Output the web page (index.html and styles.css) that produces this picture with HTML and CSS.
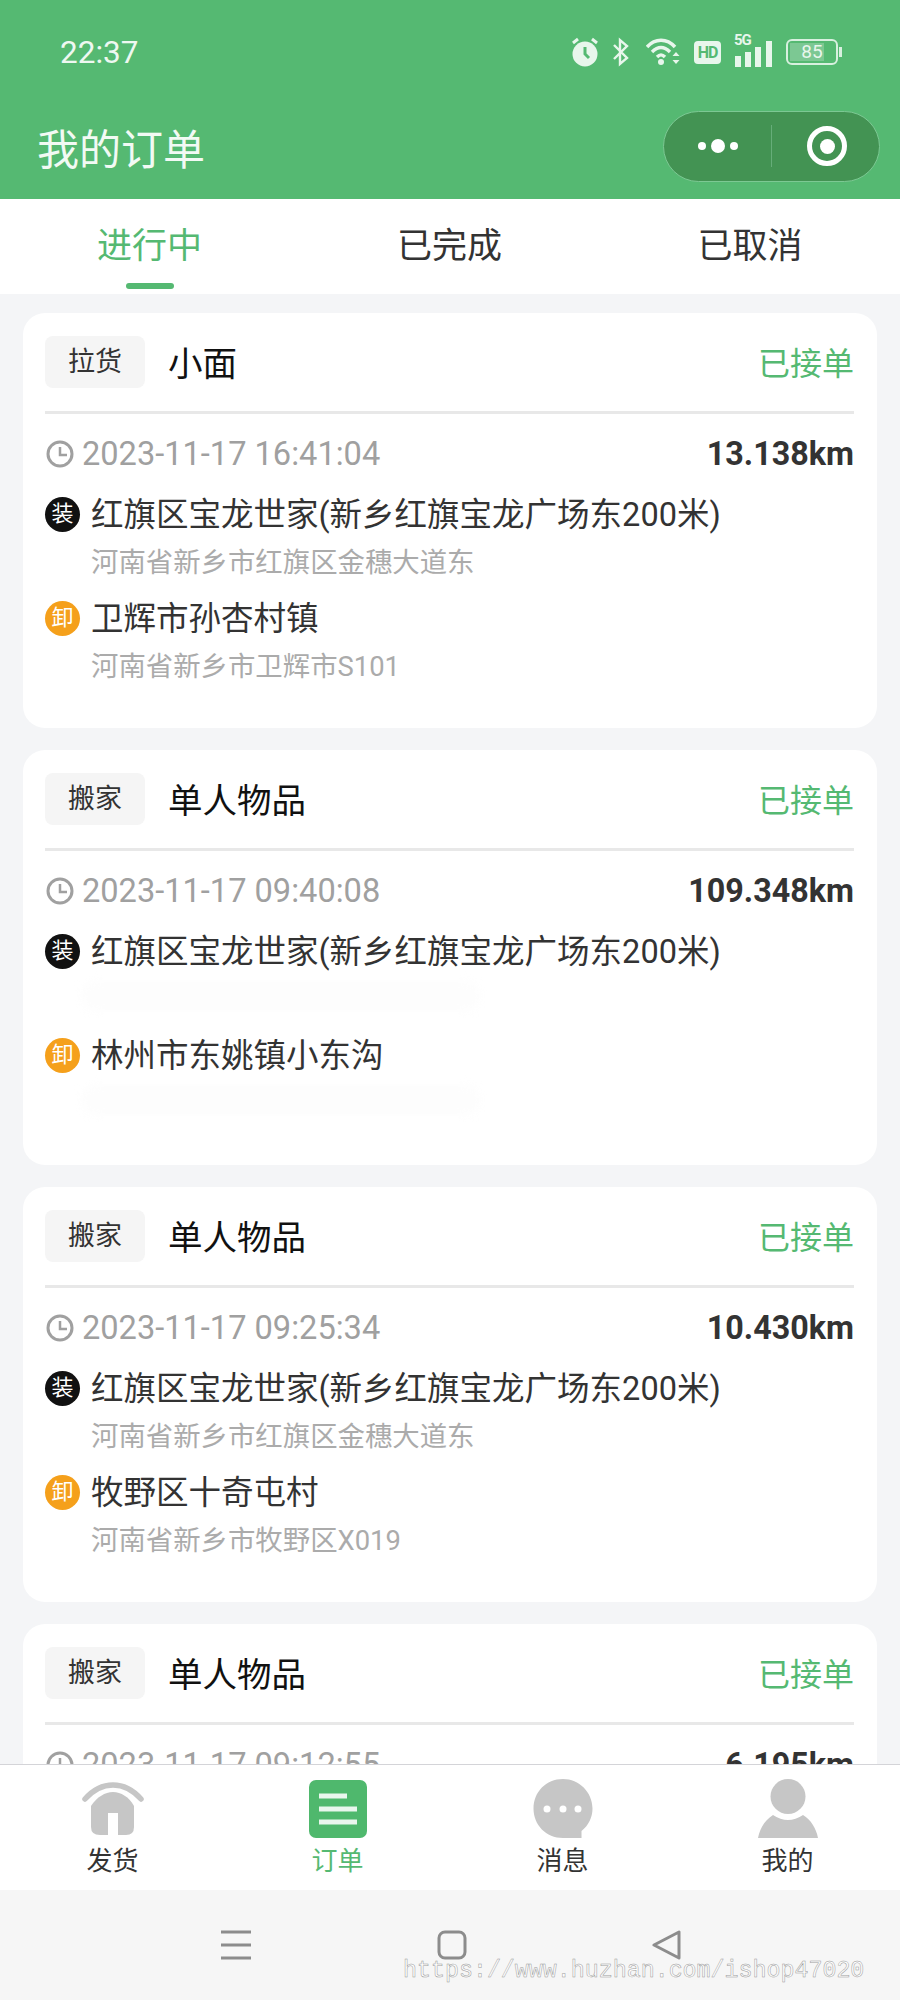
FILE: index.html
```html
<!DOCTYPE html>
<html lang="en">
  <head>
    <meta charset="UTF-8" />
    <title>我的订单</title>
    <link rel="stylesheet" href="styles.css">
  </head>
  <body>
    <header class="top">
      <div class="status">
        <span class="clock">22:37</span>
        <div class="status-icons">
          <svg class="ic-alarm" width="28" height="30" viewBox="0 0 28 30">
            <circle cx="14" cy="17" r="12.5" fill="#e8f6ec"/>
            <path d="M2 6 7 2M26 6 21 2" stroke="#e8f6ec" stroke-width="3" fill="none"/>
            <path d="M14 10v7l4 4" stroke="#55b972" stroke-width="3" fill="none"/>
          </svg>
          <svg class="ic-bt" width="18" height="30" viewBox="0 0 18 30">
            <path d="M2 8 15 21 8 27V3l7 6L2 22" stroke="#e8f6ec" stroke-width="2.4" fill="none"/>
          </svg>
          <svg class="ic-wifi" width="38" height="30" viewBox="0 0 38 30">
            <path d="M1 10C9 1 21 1 29 10M6 15c6-6 12-6 18 0M11 20c3-3 5-3 8 0" stroke="#e8f6ec" stroke-width="3.4" fill="none"/>
            <circle cx="15" cy="25" r="3" fill="#e8f6ec"/>
            <path d="M30 15l3.500 4h-7zM30 27l3.500-4h-7z" fill="#e8f6ec"/>
          </svg>
          <span class="hd">HD</span>
          <div class="signal">
            <span class="five-g">5G</span>
            <svg width="41" height="26" viewBox="0 0 41 26">
              <rect x="2" y="15" width="6" height="11" fill="#e8f6ec"/>
              <rect x="12" y="11" width="6" height="15" fill="#e8f6ec"/>
              <rect x="22" y="6" width="6" height="20" fill="#e8f6ec"/>
              <rect x="33" y="0" width="6" height="26" fill="#e8f6ec"/>
            </svg>
          </div>
          <div class="battery">
            <div class="battery-body"><span class="battery-level"></span><span class="battery-num">85</span></div>
            <span class="battery-tip"></span>
          </div>
        </div>
      </div>
      <div class="titlebar">
        <h1>我的订单</h1>
        <div class="capsule">
          <div class="capsule-dots"><i></i><b></b><i></i></div>
          <span class="capsule-line"></span>
          <div class="capsule-ring"><b></b></div>
        </div>
      </div>
    </header>

    <nav class="tabs">
      <a class="tab active" href="#">进行中</a>
      <a class="tab" href="#">已完成</a>
      <a class="tab" href="#">已取消</a>
    </nav>

    <main class="list">
      <section class="card">
        <div class="card-head">
          <span class="tag">拉货</span>
          <span class="name">小面</span>
          <span class="state">已接单</span>
        </div>
        <div class="meta">
          <span class="time">
            <svg class="clock-icon" width="28" height="28" viewBox="0 0 28 28"><circle cx="14" cy="14" r="12" fill="none" stroke="#a0a0a0" stroke-width="3"/><path d="M14 7v8h7" fill="none" stroke="#a0a0a0" stroke-width="2.500"/></svg>
            2023-11-17 16:41:04
          </span>
          <span class="dist">13.138km</span>
        </div>
        <div class="addr"><span class="badge load">装</span>红旗区宝龙世家(新乡红旗宝龙广场东200米)</div>
        <div class="sub">河南省新乡市红旗区金穗大道东</div>
        <div class="addr second"><span class="badge unload">卸</span>卫辉市孙杏村镇</div>
        <div class="sub">河南省新乡市卫辉市S101</div>
      </section>

      <section class="card">
        <div class="card-head">
          <span class="tag">搬家</span>
          <span class="name">单人物品</span>
          <span class="state">已接单</span>
        </div>
        <div class="meta">
          <span class="time">
            <svg class="clock-icon" width="28" height="28" viewBox="0 0 28 28"><circle cx="14" cy="14" r="12" fill="none" stroke="#a0a0a0" stroke-width="3"/><path d="M14 7v8h7" fill="none" stroke="#a0a0a0" stroke-width="2.500"/></svg>
            2023-11-17 09:40:08
          </span>
          <span class="dist">109.348km</span>
        </div>
        <div class="addr"><span class="badge load">装</span>红旗区宝龙世家(新乡红旗宝龙广场东200米)</div>
        <div class="sub"><span class="smudge"></span></div>
        <div class="addr second"><span class="badge unload">卸</span>林州市东姚镇小东沟</div>
        <div class="sub"><span class="smudge"></span></div>
      </section>

      <section class="card">
        <div class="card-head">
          <span class="tag">搬家</span>
          <span class="name">单人物品</span>
          <span class="state">已接单</span>
        </div>
        <div class="meta">
          <span class="time">
            <svg class="clock-icon" width="28" height="28" viewBox="0 0 28 28"><circle cx="14" cy="14" r="12" fill="none" stroke="#a0a0a0" stroke-width="3"/><path d="M14 7v8h7" fill="none" stroke="#a0a0a0" stroke-width="2.500"/></svg>
            2023-11-17 09:25:34
          </span>
          <span class="dist">10.430km</span>
        </div>
        <div class="addr"><span class="badge load">装</span>红旗区宝龙世家(新乡红旗宝龙广场东200米)</div>
        <div class="sub">河南省新乡市红旗区金穗大道东</div>
        <div class="addr second"><span class="badge unload">卸</span>牧野区十奇屯村</div>
        <div class="sub">河南省新乡市牧野区X019</div>
      </section>

      <section class="card">
        <div class="card-head">
          <span class="tag">搬家</span>
          <span class="name">单人物品</span>
          <span class="state">已接单</span>
        </div>
        <div class="meta">
          <span class="time">
            <svg class="clock-icon" width="28" height="28" viewBox="0 0 28 28"><circle cx="14" cy="14" r="12" fill="none" stroke="#a0a0a0" stroke-width="3"/><path d="M14 7v8h7" fill="none" stroke="#a0a0a0" stroke-width="2.500"/></svg>
            2023-11-17 09:12:55
          </span>
          <span class="dist">6.195km</span>
        </div>
      </section>
    </main>

    <footer class="tabbar">
      <a class="tabbar-item" href="#">
        <svg width="64" height="60" viewBox="0 0 64 60">
          <path d="M10 27C16 18 24 13 32 13s16 5 21 14v21q0 8-8 8H19q-9 0-9-8z" fill="#c6c6c6"/>
          <path d="M4 20C12 11 22 6 32 6s20 5 28 14" fill="none" stroke="#c6c6c6" stroke-width="5.500" stroke-linecap="round"/>
          <rect x="27" y="34" width="10" height="22" fill="#fff"/>
        </svg>
        <span>发货</span>
      </a>
      <a class="tabbar-item active" href="#">
        <svg width="58" height="60" viewBox="0 0 58 60">
          <rect x="0" y="1" width="58" height="58" rx="7" fill="#4fb86d"/>
          <path d="M10 17h28M10 30h38M10 43h38" stroke="#e9f6ed" stroke-width="5"/>
        </svg>
        <span>订单</span>
      </a>
      <a class="tabbar-item" href="#">
        <svg width="60" height="60" viewBox="0 0 60 60">
          <path d="M30 0c16 0 29.500 13 29.500 29.500 0 9-4 17-11 22.500v7H30C13 59 .5 46 .5 29.500S13 0 30 0z" fill="#c6c6c6"/>
          <circle cx="14" cy="30" r="3.500" fill="#fff"/>
          <circle cx="30" cy="30" r="3.500" fill="#fff"/>
          <circle cx="45" cy="30" r="3.500" fill="#fff"/>
        </svg>
        <span>消息</span>
      </a>
      <a class="tabbar-item" href="#">
        <svg width="60" height="60" viewBox="0 0 60 60">
          <circle cx="30" cy="17.500" r="17.500" fill="#c6c6c6"/>
          <path d="M15 36Q30 46 45 36C53 41 58 49 60 59H0C2 49 7 41 15 36z" fill="#c6c6c6"/>
        </svg>
        <span>我的</span>
      </a>
    </footer>

    <div class="sysnav">
      <svg width="32" height="30" viewBox="0 0 32 30"><path d="M1 2h30M1 15h30M1 28h30" stroke="#8c8c8c" stroke-width="3"/></svg>
      <svg width="30" height="30" viewBox="0 0 30 30"><rect x="2" y="2" width="26" height="26" rx="6" fill="none" stroke="#8c8c8c" stroke-width="3"/></svg>
      <svg width="30" height="30" viewBox="0 0 30 30"><path d="M27 2v26L2 15z" fill="none" stroke="#8c8c8c" stroke-width="3" stroke-linejoin="round"/></svg>
      <span class="watermark">https://www.huzhan.com/ishop47020</span>
    </div>
  </body>
</html>
```

FILE: styles.css
```css
* {
  box-sizing: border-box;
}

body {
  margin: 0;
  width: 900px;
  height: 2000px;
  display: flex;
  flex-direction: column;
  overflow: hidden;
  font-family: Roboto, "Noto Sans CJK SC", sans-serif;
  background-color: #f4f5f7;
  color: #333;
}

a {
  text-decoration: none;
  color: inherit;
}

/* green top area */
.top {
  background-color: #55b972;
  color: #fff;
  height: 199px;
}

.status {
  height: 104px;
  display: flex;
  justify-content: space-between;
  align-items: center;
  padding: 0 58px 0 60px;
}

.clock {
  font-size: 31.500px;
  color: #eef8f1;
}

.status-icons {
  display: flex;
  align-items: center;
  gap: 12px;
}

.ic-alarm {
  margin-right: 1px;
}

.ic-bt {
  margin-right: 4px;
}

.ic-wifi {
  margin-right: -2px;
}

.hd {
  width: 27px;
  height: 23px;
  background-color: #e8f6ec;
  color: #55b972;
  border-radius: 4px;
  font-size: 16px;
  font-weight: 700;
  line-height: 23px;
  text-align: center;
  letter-spacing: -1px;
}

.signal {
  position: relative;
  width: 41px;
  height: 30px;
  display: flex;
  align-items: flex-end;
}

.five-g {
  position: absolute;
  left: 1px;
  top: -5px;
  font-size: 15px;
  font-weight: 700;
  line-height: 16px;
  letter-spacing: -1px;
  color: #e8f6ec;
  background-color: #55b972;
  padding-right: 2px;
}

.battery {
  display: flex;
  align-items: center;
  gap: 1px;
}

.battery-body {
  position: relative;
  width: 52px;
  height: 26px;
  border: 2px solid #d8f0df;
  border-radius: 6px;
  overflow: hidden;
}

.battery-level {
  position: absolute;
  left: 2px;
  top: 2px;
  bottom: 2px;
  width: 34px;
  background-color: #7cc893;
}

.battery-num {
  position: relative;
  display: block;
  font-size: 19px;
  line-height: 22px;
  text-align: center;
  color: #e8f6ec;
}

.battery-tip {
  width: 3px;
  height: 10px;
  background-color: #d8f0df;
}

.titlebar {
  height: 95px;
  padding: 0 20px 11px 37px;
  display: flex;
  justify-content: space-between;
  align-items: center;
}

.titlebar h1 {
  margin: 0;
  font-size: 42px;
  font-weight: 400;
  color: #f2faf4;
}

.capsule {
  width: 217px;
  height: 71px;
  border: 1px solid #7cc893;
  border-radius: 36px;
  background-color: #439353;
  display: flex;
  align-items: center;
}

.capsule-dots {
  width: 107px;
  display: flex;
  justify-content: center;
  align-items: center;
  gap: 5px;
}

.capsule-dots i {
  width: 8px;
  height: 8px;
  border-radius: 50%;
  background-color: #fff;
}

.capsule-dots b {
  width: 14px;
  height: 14px;
  border-radius: 50%;
  background-color: #fff;
}

.capsule-line {
  width: 1px;
  height: 42px;
  background-color: #66ad79;
}

.capsule-ring {
  width: 40px;
  height: 40px;
  margin-left: 35px;
  border: 5px solid #fff;
  border-radius: 50%;
  display: flex;
  justify-content: center;
  align-items: center;
}

.capsule-ring b {
  width: 15px;
  height: 15px;
  border-radius: 50%;
  background-color: #fff;
}

/* order state tabs */
.tabs {
  height: 95px;
  background-color: #fff;
  display: grid;
  grid-template-columns: 299px 301px 300px;
  flex-shrink: 0;
}

.tab {
  position: relative;
  font-size: 35px;
  line-height: 95px;
  text-align: center;
}

.tab.active {
  color: #55b972;
}

.tab.active::after {
  content: "";
  position: absolute;
  left: 126px;
  bottom: 5px;
  width: 48px;
  height: 6px;
  border-radius: 3px;
  background-color: #55b972;
}

/* order cards */
.list {
  flex: 1;
  min-height: 0;
  overflow: hidden;
  padding: 19px 23px 0;
}

.card {
  height: 415px;
  margin-bottom: 22px;
  padding: 23px 23px 44px 22px;
  background-color: #fff;
  border-radius: 22px;
}

.card-head {
  display: flex;
  align-items: center;
  height: 78px;
  padding-bottom: 23px;
  border-bottom: 3px solid #e8e8e8;
}

.tag {
  width: 100px;
  height: 52px;
  background-color: #f5f5f5;
  border-radius: 8px;
  font-size: 27px;
  line-height: 53px;
  text-align: center;
}

.name {
  margin: 0 0 2px 23px;
  font-size: 34.500px;
  color: #111;
}

.state {
  margin: 0 0 2px auto;
  font-size: 32px;
  color: #55b972;
}

.meta {
  display: flex;
  justify-content: space-between;
  align-items: center;
  height: 42px;
  margin-top: 19px;
}

.time {
  display: flex;
  align-items: center;
  gap: 8px;
  font-size: 32.600px;
  color: #a0a0a0;
}

.clock-icon {
  margin-left: 1px;
}

.dist {
  font-size: 32.300px;
  font-weight: 700;
}

.addr {
  display: flex;
  align-items: center;
  height: 44px;
  margin-top: 16px;
  padding-bottom: 3px;
  font-size: 32.500px;
}

.addr.second {
  margin-top: 13px;
}

.badge {
  width: 35px;
  height: 35px;
  margin: 6px 11px 0 0;
  border-radius: 50%;
  font-size: 22px;
  line-height: 33px;
  text-align: center;
  color: #fff;
  flex-shrink: 0;
}

.badge.load {
  background-color: #111;
}

.badge.unload {
  background-color: #f5a01b;
}

.sub {
  height: 38px;
  margin-top: 9px;
  padding-left: 46px;
  font-size: 27.400px;
  line-height: 38px;
  color: #ababab;
}

.smudge {
  display: block;
  width: 400px;
  height: 30px;
  margin: 4px 0 0 -10px;
  background-color: #fdfdfd;
  border-radius: 15px;
  filter: blur(4px);
}

/* bottom tab bar */
.tabbar {
  height: 126px;
  flex-shrink: 0;
  background-color: #fff;
  border-top: 1px solid #d4d4d8;
  display: grid;
  grid-template-columns: repeat(4, 1fr);
  padding-top: 14px;
}

.tabbar-item {
  display: flex;
  flex-direction: column;
  align-items: center;
  font-size: 26px;
  line-height: 36px;
}

.tabbar-item span {
  margin-top: 4px;
}

.tabbar-item.active {
  color: #55b972;
}

/* android nav strip */
.sysnav {
  position: relative;
  height: 110px;
  flex-shrink: 0;
  background-color: #f6f6f6;
  display: flex;
  justify-content: center;
  align-items: flex-start;
  gap: 185px;
  padding: 40px 0 0 2px;
}

.watermark {
  position: absolute;
  left: 403px;
  top: 67px;
  font-family: "Liberation Mono", monospace;
  font-size: 23.300px;
  line-height: 28px;
  color: #fff;
  -webkit-text-stroke: 0.5px #999;
}
```
